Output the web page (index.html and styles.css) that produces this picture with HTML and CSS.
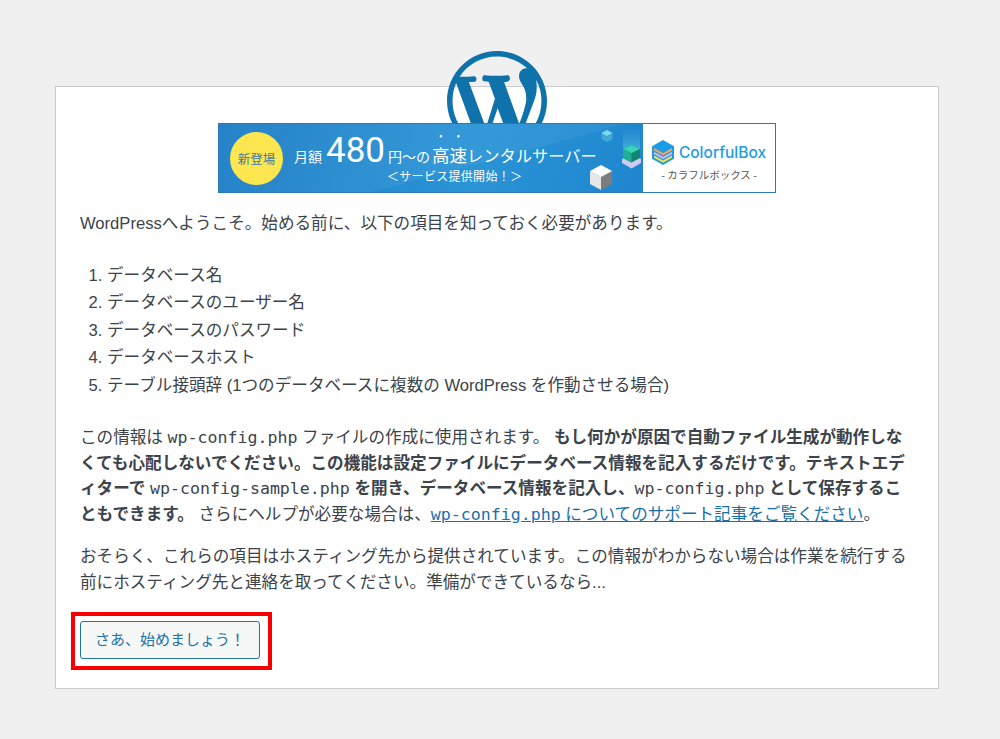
FILE: index.html
```html
<!DOCTYPE html>
<html lang="ja">

<head>
    <meta charset="utf-8">
    <meta name="viewport" content="width=device-width, initial-scale=1.0">
    <title>WordPress › セットアップ設定ファイル</title>
    <link rel="stylesheet" href="styles.css">
</head>

<body>

    <main class="card">
        <svg class="wp-logo" viewBox="0 0 20 20" aria-label="WordPress">
            <path d="M20 10c0-5.51-4.49-10-10-10C4.48 0 0 4.49 0 10c0 5.52 4.48 10 10 10 5.51 0 10-4.48 10-10zM7.78 15.37L4.37 6.22c.55-.02 1.17-.08 1.17-.08.5-.06.44-1.13-.06-1.11 0 0-1.45.11-2.37.11-.18 0-.37 0-.58-.01C4.12 2.69 6.87 1.11 10 1.11c2.33 0 4.45.87 6.05 2.34-.68-.11-1.65.39-1.65 1.58 0 .74.45 1.36.9 2.1.35.61.55 1.36.55 2.46 0 1.49-1.4 5-1.4 5l-3.03-8.37c.54-.02.82-.17.82-.17.5-.05.44-1.25-.06-1.22 0 0-1.44.12-2.38.12-.87 0-2.33-.12-2.33-.12-.5-.03-.56 1.2-.06 1.22l.92.08 1.26 3.41zM17.41 10c.24-.64.74-1.87.43-4.25.7 1.29 1.05 2.71 1.05 4.25 0 3.29-1.73 6.24-4.4 7.78.97-2.59 1.94-5.2 2.92-7.78zM6.1 18.09C3.12 16.65 1.11 13.53 1.11 10c0-1.3.23-2.48.72-3.59C3.25 10.3 4.67 14.2 6.1 18.09zm4.03-6.63l2.58 6.98c-.86.29-1.76.45-2.71.45-.79 0-1.57-.11-2.29-.33.81-2.38 1.62-4.74 2.42-7.1z"/>
        </svg>

        <div class="banner">
            <div class="banner-ad">
                <div class="badge">新登場</div>
                <div class="ad-text">
                    <div class="ad-main">
                        <span class="ad-small">月額</span>
                        <span class="ad-price">480</span>
                        <span class="ad-unit">円〜の</span>
                        <span class="ad-fast">高速</span>
                        <span class="ad-mid">レンタルサーバー</span>
                    </div>
                    <div class="ad-sub">＜サービス提供開始！＞</div>
                </div>
                <svg class="cubes" viewBox="0 0 55 68">
                    <defs>
                        <linearGradient id="beam" x1="0" y1="0" x2="0" y2="1">
                            <stop offset="0" stop-color="#4fc3d9" stop-opacity="0"/>
                            <stop offset="1" stop-color="#6fd8e0" stop-opacity=".55"/>
                        </linearGradient>
                    </defs>
                    <path d="M17 6l5.500 3v6L17 18l-5.500-3V9z" fill="#3fa9d8"/>
                    <path d="M17 6l5.500 3-5.500 3-5.500-3z" fill="#7fd6ec"/>
                    <path d="M33 4h17v24H33z" fill="url(#beam)"/>
                    <path d="M41.500 30l9.500 5v4l-9.500 5.500L32 39v-4z" fill="#cfcaf2"/>
                    <path d="M41.500 21l8.500 4v9l-8.500 4.500L33 34v-9z" fill="#128472"/>
                    <path d="M41.500 21l8.500 4-8.500 4-8.500-4z" fill="#38d4b8"/>
                    <path d="M33 25l8.500 4v9.500L33 34z" fill="#1fae97"/>
                    <path d="M11 41l11 6v13l-11 6z" fill="#7d7d7d"/>
                    <path d="M0 47l11 6v13L0 60z" fill="#e6e6e6"/>
                    <path d="M11 41l11 6-11 6-11-6z" fill="#fff"/>
                </svg>
            </div>
            <div class="banner-brand">
                <div class="brand-row">
                    <svg class="brand-mark" viewBox="0 0 22 25">
                        <path d="M11 0l11 6.250v12.500L11 25 0 18.750V6.250z" fill="#1c9be6"/>
                        <path d="M2 8l9 5 9-5v2.500l-9 5-9-5z" fill="#f0a35e"/>
                        <path d="M2 11.800l9 5 9-5v2.500l-9 5-9-5z" fill="#c4b8e8"/>
                        <path d="M2 15.600l9 5 9-5v2.200l-9 5-9-5z" fill="#f8de4e"/>
                    </svg>
                    <span class="brand-name">ColorfulBox</span>
                </div>
                <div class="brand-kana">- カラフルボックス -</div>
            </div>
        </div>

        <p class="intro">WordPressへようこそ。始める前に、以下の項目を知っておく必要があります。</p>

        <ol class="items">
            <li>データベース名</li>
            <li>データベースのユーザー名</li>
            <li>データベースのパスワード</li>
            <li>データベースホスト</li>
            <li>テーブル接頭辞 (1つのデータベースに複数の WordPress を作動させる場合)</li>
        </ol>

        <p>この情報は <code>wp-config.php</code> ファイルの作成に使用されます。 <strong>もし何かが原因で自動ファイル生成が動作しなくても心配しないでください。この機能は設定ファイルにデータベース情報を記入するだけです。テキストエディターで <code>wp-config-sample.php</code> を開き、データベース情報を記入し、<code>wp-config.php</code> として保存することもできます。</strong> さらにヘルプが必要な場合は、<a href="#"><code>wp-config.php</code> についてのサポート記事をご覧ください</a>。</p>

        <p>おそらく、これらの項目はホスティング先から提供されています。この情報がわからない場合は作業を続行する前にホスティング先と連絡を取ってください。準備ができているなら...</p>

        <div class="actions">
            <span class="highlight">
                <a class="button" href="#">さあ、始めましょう！</a>
            </span>
        </div>
    </main>

</body>

</html>
```

FILE: styles.css
```css
body {
    background-color: #f0f0f1;
    color: #3c434a;
    font-family: "Liberation Sans", "Noto Sans CJK JP", sans-serif;
    font-size: 16.6px;
    line-height: 25.5px;
    margin: 0px;
    padding: 86px 61px 50px 55px;
}

.card {
    background-color: white;
    border: 1px solid #c9cacc;
    height: 603px;
    box-sizing: border-box;
    padding: 36px 24px 0 24px;
    position: relative;
}

.wp-logo {
    position: absolute;
    top: -36px;
    left: 391px;
    width: 100px;
    height: 100px;
    fill: #0f72aa;
}

.banner {
    display: flex;
    position: relative;
    width: 558px;
    height: 70px;
    margin-left: 138px;
    box-sizing: border-box;
    border: 1px solid #2a78b8;
    font-family: "Noto Sans CJK JP", sans-serif;
}

.banner-ad {
    flex: 1;
    display: flex;
    align-items: center;
    padding-left: 11px;
    position: relative;
    color: white;
    background: linear-gradient(165deg, rgba(255, 255, 255, 0.05) 60%, transparent 60%), linear-gradient(100deg, #1a7cc6 0%, #2a94d6 60%, #1f86cf 100%);
}

.badge {
    width: 53px;
    height: 53px;
    border-radius: 50%;
    background-color: #fde64f;
    color: #3f78a8;
    font-size: 12.500px;
    text-align: center;
    line-height: 53px;
    flex-shrink: 0;
}

.ad-text {
    margin-left: 11px;
    padding-bottom: 3px;
    white-space: nowrap;
}

.ad-main {
    display: flex;
    align-items: baseline;
    height: 39px;
    line-height: 42px;
}

.ad-small {
    font-size: 14px;
}

.ad-price {
    font-family: "Roboto", sans-serif;
    font-size: 35px;
    margin: 0 3px 0 4px;
}

.ad-unit {
    font-size: 14px;
    margin-right: 2px;
}

.ad-fast {
    font-size: 17.500px;
    text-emphasis: "•" white;
    -webkit-text-emphasis: "•" white;
}

.ad-mid {
    font-size: 16.250px;
}

.ad-sub {
    font-size: 12px;
    line-height: 16px;
    letter-spacing: 0.3px;
    padding-left: 93px;
}

.cubes {
    position: absolute;
    left: 371px;
    top: 0;
    width: 55px;
    height: 68px;
}

.banner-brand {
    width: 132px;
    background-color: white;
    text-align: center;
}

.brand-row {
    display: flex;
    align-items: center;
    justify-content: center;
    margin-top: 15px;
    gap: 5px;
}

.brand-mark {
    width: 22px;
    height: 25px;
}

.brand-name {
    color: #1c9be6;
    font-family: "Inter", sans-serif;
    font-size: 15.500px;
    font-weight: 500;
    line-height: 27px;
}

.brand-kana {
    color: #555;
    font-size: 10.500px;
    line-height: 16px;
    margin-top: 1px;
}

p {
    margin: 0 0 17px 0;
    line-break: loose;
}

.intro {
    margin-top: 18px;
    margin-bottom: 26px;
}

.items {
    margin: 0 0 27px 0;
    padding-left: 27px;
}

.items li {
    margin-bottom: 2px;
}

code {
    font-family: "DejaVu Sans Mono", monospace;
    font-size: 16.6px;
    font-weight: normal;
}

a {
    color: #1a6fa8;
}

.actions {
    margin-top: 14px;
}

.highlight {
    display: inline-flex;
    border: 4px solid #f90000;
    margin-left: -9px;
    padding: 5px 8px 7px 5px;
}

.button {
    display: block;
    width: 180px;
    height: 38px;
    box-sizing: border-box;
    text-align: center;
    font-size: 15px;
    line-height: 36px;
    text-decoration: none;
    color: #2271a8;
    background-color: #f6f7f7;
    border: 1px solid #2271a8;
    border-radius: 3px;
}
```
